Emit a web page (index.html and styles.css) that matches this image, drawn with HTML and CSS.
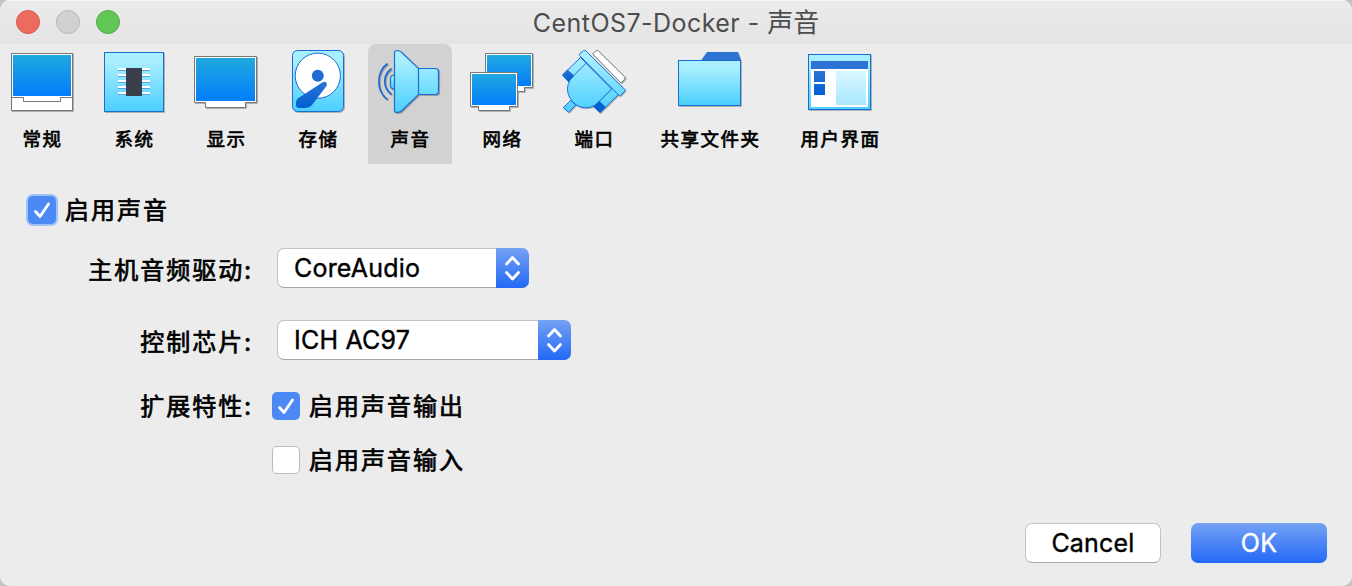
FILE: index.html
```html
<!DOCTYPE html>
<html lang="zh-CN">
<head>
<meta charset="utf-8">
<title>CentOS7-Docker - 声音</title>
<link rel="stylesheet" href="styles.css">
</head>
<body>
<svg class="defs" width="0" height="0" aria-hidden="true">
  <defs>
    <linearGradient id="screen" x1="0" y1="0" x2="0" y2="1"><stop offset="0" stop-color="#20a9df"/><stop offset="1" stop-color="#017efb"/></linearGradient>
    <linearGradient id="sky" x1="0" y1="0" x2="0" y2="1"><stop offset="0.15" stop-color="#aaefff"/><stop offset="1" stop-color="#4bcfff"/></linearGradient>
    <linearGradient id="plug" gradientUnits="userSpaceOnUse" x1="0" y1="8" x2="0" y2="62"><stop offset="0" stop-color="#aaefff"/><stop offset="1" stop-color="#4bcfff"/></linearGradient>
    <linearGradient id="deep" x1="0" y1="0" x2="0" y2="1"><stop offset="0" stop-color="#2c73d3"/><stop offset="1" stop-color="#0060d2"/></linearGradient>
    <linearGradient id="pale" x1="0" y1="0" x2="0" y2="1"><stop offset="0.1" stop-color="#d5f6ff"/><stop offset="1" stop-color="#a9e7ff"/></linearGradient>
  </defs>
</svg>
<main class="window">
  <header class="titlebar">
    <div class="lights"><i class="light close"></i><i class="light minimise"></i><i class="light expand"></i></div>
    <h1 class="title"><span class="title-name">CentOS7-Docker - </span><span class="title-page">声音</span></h1>
  </header>

  <nav class="toolbar">
    <a class="tab">
      <svg class="icon" viewBox="0 0 64 64"><rect x="1.5" y="4.5" width="61" height="57" fill="#fff" stroke="#777"/><path fill="url(#screen)" d="M3 6h58v41H3z"/><path fill="none" stroke="#777" d="M2 48.5H13.500V52.500H50.500V48.500H62"/></svg>
      <span>常规</span>
    </a>
    <a class="tab">
      <svg class="icon" viewBox="0 0 64 64"><rect x="2.500" y="3.500" width="59" height="59" fill="url(#sky)" stroke="#1b6dd6"/><path fill="#fff" d="M16 19h32v2H16zM16 25h32v2H16zM16 31h32v2H16zM16 37h32v2H16zM16 43h32v2H16z"/><path stroke="#5aa5df" d="M16 21.500h32M16 27.500h32M16 33.500h32M16 39.500h32M16 45.500h32"/><path fill="#393f4b" d="M24 19h16v28H24z"/></svg>
      <span>系统</span>
    </a>
    <a class="tab">
      <svg class="icon" viewBox="0 0 64 64"><path fill="#fff" stroke="#777" d="M.5 7.500h62v46H51.500v5H11.500v-5H.5z"/><path fill="url(#screen)" d="M2 9h59v43H2z"/></svg>
      <span>显示</span>
    </a>
    <a class="tab">
      <svg class="icon" viewBox="0 0 64 64"><rect x="6.500" y="1.500" width="51" height="61" rx="5" fill="url(#sky)" stroke="#1b6dd6"/><circle cx="31.800" cy="26.700" r="22.600" fill="#fff" stroke="#1b6dd6"/><circle cx="31.800" cy="26.700" r="6" fill="#1f6bd3"/><path fill="url(#deep)" d="M37 33Q39 32.200 40.300 33.500Q41.600 35 40.500 37L26 56Q23.500 59 20 59H13Q10 59 10 56V53Q10 50.500 12.500 49z"/></svg>
      <span>存储</span>
    </a>
    <a class="tab selected">
      <svg class="icon" viewBox="0 0 64 64"><path fill="none" stroke="#1b6dd6" stroke-width="1.700" d="M9.500 14.500C-2 23.500-2 42 9.500 50.500M13.500 19.500C4.500 26.500 4.500 38.500 13.500 45.500"/><path fill="url(#sky)" stroke="#1b6dd6" stroke-width="1.200" d="M16.500 26Q12.500 26 12.500 29.500V36.500Q12.500 40 16.500 40z"/><path fill="url(#sky)" stroke="#1b6dd6" stroke-width="1.200" d="M16.500 4Q16.500 1.500 19 1.500Q21.500 1.300 23.500 3.300L40.500 19.500H57.500Q60.500 19.500 60.500 22.500V42.500Q60.500 45.500 57.500 45.500H40.500L24 61.500Q22.500 63.300 20 63.300H18.500Q16.500 63.300 16.500 61.500zM40.500 19.500V45.500"/></svg>
      <span>声音</span>
    </a>
    <a class="tab">
      <svg class="icon" viewBox="0 0 64 64"><path fill="#fff" stroke="#777" d="M15.500 4.500h47v34H54.500v4H24v-4h-8.500z"/><path fill="url(#screen)" d="M17 6h44v31H17z"/><path fill="#fff" stroke="#777" d="M.5 23.500h47v34H39.500v4H8.500v-4H.5z"/><path fill="url(#screen)" d="M2 25h44v31H2z"/></svg>
      <span>网络</span>
    </a>
    <a class="tab">
      <svg class="icon" viewBox="0 0 64 64"><path fill="#fff" stroke="#777" stroke-linejoin="round" d="M30.700 5L34 1.700Q35.300 1 36.500 2L62.800 28Q63.700 29 62.800 30L59 34z"/><g fill="url(#plug)" stroke="#1b6dd6" stroke-linejoin="round"><path d="M.5 26L18.500 8.500L25 15L7 33zM50.300 39.300L56.500 45.500L38 63.500L31.500 57.500zM1.300 58.700L8.700 51.300L13.700 56L6.700 63.300z"/><path d="M24 14.300L9.500 28.800C4 36 4 45 10.500 52.500C17 60 27 60.500 34 55.500L49.700 40z"/><path d="M17.500 6.500Q17 5.500 18 4.500L21.500 1.500Q22.800 1 24 2L62.800 40.500Q63.500 41.500 62.500 42.500L58.500 46.500Q57.500 47 56.500 46z"/></g><path fill="url(#deep)" d="M.3 26L5.500 20.500L12.300 26.700L6.300 32.700z"/><path fill="#0060d2" d="M37.300 52L43.700 58L38 63.700L31.500 57.700z"/></svg>
      <span>端口</span>
    </a>
    <a class="tab wide">
      <svg class="icon" viewBox="0 0 64 64"><path fill="#2c73d3" d="M23 11.500L29 3H60L63 11.500z"/><rect x=".5" y="11.500" width="62" height="45" fill="url(#sky)" stroke="#1b6dd6"/></svg>
      <span>共享文件夹</span>
    </a>
    <a class="tab medium">
      <svg class="icon" viewBox="0 0 64 64"><rect x=".5" y="5.500" width="62" height="55" fill="url(#sky)" stroke="#1b6dd6"/><path fill="#fff" d="M3 12h57v46H3z"/><path fill="#2c73d3" d="M3 12h57v8H3z"/><path fill="url(#deep)" d="M6 22h11v11H6zM6 35h11v11H6z"/><path fill="url(#pale)" d="M28 22h30v34H28z"/></svg>
      <span>用户界面</span>
    </a>
  </nav>

  <form class="form">
    <div class="row enable">
      <i class="box checked focused"><svg viewBox="0 0 28 28"><path d="M7.500 15.500L12 20.500L20.500 8"/></svg></i>
      <span class="text">启用声音</span>
    </div>
    <div class="row driver">
      <span class="label">主机音频驱动:</span>
      <div class="select"><span class="value">CoreAudio</span><i class="stepper"><svg viewBox="0 0 33 40"><path d="M10.500 16L16.500 9.500L22.500 16M10.500 24.500L16.500 31L22.500 24.500"/></svg></i></div>
    </div>
    <div class="row chip">
      <span class="label">控制芯片:</span>
      <div class="select long"><span class="value">ICH AC97</span><i class="stepper"><svg viewBox="0 0 33 40"><path d="M10.500 16L16.500 9.500L22.500 16M10.500 24.500L16.500 31L22.500 24.500"/></svg></i></div>
    </div>
    <div class="row output">
      <span class="label option">扩展特性:</span>
      <i class="box checked"><svg viewBox="0 0 28 28"><path d="M7.500 15.500L12 20.500L20.500 8"/></svg></i>
      <span class="text">启用声音输出</span>
    </div>
    <div class="row input">
      <span class="label"></span>
      <i class="box"></i>
      <span class="text">启用声音输入</span>
    </div>
  </form>

  <footer class="actions">
    <button class="button cancel">Cancel</button>
    <button class="button primary">OK</button>
  </footer>
</main>
</body>
</html>
```
FILE: styles.css
```css
* { box-sizing: border-box; }
body { margin: 0; background: #c4c4c4; font-family: Inter, "Noto Sans CJK SC", sans-serif; color: #000; overflow: hidden; }
.defs { display: block; height: 0; }
.window { display: flex; flex-direction: column; width: 1352px; height: 586px; background: #ececec; border-radius: 10px; overflow: hidden; }

.titlebar { display: grid; grid-template-columns: 1fr auto 1fr; align-items: center; height: 44px; flex: none; background: linear-gradient(#ebebeb, #e4e4e4); box-shadow: inset 0 1px #f5f5f5; }
.lights { display: flex; gap: 16px; padding-left: 16px; }
.light { width: 24px; height: 24px; border-radius: 50%; border: 1px solid; }
.close { background: #ed6a5f; border-color: #d8574d; }
.minimise { background: #d0d0d0; border-color: #b5b5b5; }
.expand { background: #62c655; border-color: #50aa44; }
.title { display: flex; align-items: center; margin: 0; font-size: 25px; font-weight: 400; color: #4d4d4d; white-space: pre; }
.title-name { line-height: 42px; padding-top: 2px; letter-spacing: 0.450px; }
.title-page { font-family: "Noto Sans CJK SC", sans-serif; font-size: 26px; line-height: 42px; padding-bottom: 2px; }

.toolbar { display: flex; gap: 8px; height: 120px; flex: none; }
.tab { display: flex; flex-direction: column; align-items: center; width: 84px; height: 120px; padding-top: 5px; font: 18.500px/30px "Noto Sans CJK SC", sans-serif; letter-spacing: 1.500px; -webkit-text-stroke: 0.7px #000; }
.tab span { margin: 10px -1px 0 0; }
.wide { width: 132px; }
.medium { width: 112px; }
.selected { background: #d2d2d2; border-radius: 8px 8px 0 0; }
.icon { width: 64px; height: 64px; flex: none; overflow: visible; filter: drop-shadow(1px 1px 0 rgba(0, 0, 0, .25)); }

.form { display: flex; flex-direction: column; flex: 1; }
.row { display: flex; align-items: center; height: 40px; flex: none; }
.enable { padding-left: 28px; margin-top: 26px; }
.driver { margin-top: 18px; }
.chip { margin-top: 32px; }
.output { margin-top: 26px; }
.input { margin-top: 14px; }
.label, .text { font: 24px/36px "Noto Sans CJK SC", sans-serif; letter-spacing: 2px; -webkit-text-stroke: 0.700px #000; white-space: nowrap; }
.label { width: 253px; padding-top: 2px; text-align: right; }
.option { padding-top: 0; padding-bottom: 2px; }
.box { width: 28px; height: 28px; border-radius: 5px; background: #fff; border: 1px solid #bcbcbc; flex: none; }
.label + .box { margin-left: 19px; }
.text { margin-left: 9px; padding-bottom: 2px; }
.checked { background: #4b89f5; border: 0; }
.focused { box-shadow: 0 0 0 2px #9fc3f6; }
.box svg { display: block; fill: none; stroke: #fff; stroke-width: 2.800; stroke-linecap: round; stroke-linejoin: round; }

.select { display: flex; justify-content: space-between; width: 252px; height: 40px; margin-left: 24px; border-radius: 7px; background: #fff; border: 1px solid #c3c3c3; border-bottom-color: #a8a8a8; border-right: 0; }
.long { width: 294px; }
.value { padding-left: 16px; font-size: 25px; line-height: 38px; letter-spacing: 0.200px; -webkit-text-stroke: 0.400px #000; }
.stepper { width: 33px; height: 40px; margin-top: -1px; border-radius: 0 7px 7px 0; background: linear-gradient(#74a2f4, #2368f7); flex: none; }
.stepper svg { display: block; fill: none; stroke: #fff; stroke-width: 2.800; stroke-linecap: round; stroke-linejoin: round; }

.actions { display: flex; justify-content: flex-end; gap: 30px; padding: 0 25px 23px 0; }
.button { width: 136px; height: 40px; padding: 0; border-radius: 7px; border: 1px solid #c3c3c3; border-bottom-color: #a8a8a8; background: #fff; color: #000; font: 25px/38px Inter, sans-serif; letter-spacing: 0.200px; -webkit-text-stroke: 0.400px currentColor; }
.primary { color: #fff; border: 0; background: linear-gradient(#74a2f4, #2368f7); }
```
